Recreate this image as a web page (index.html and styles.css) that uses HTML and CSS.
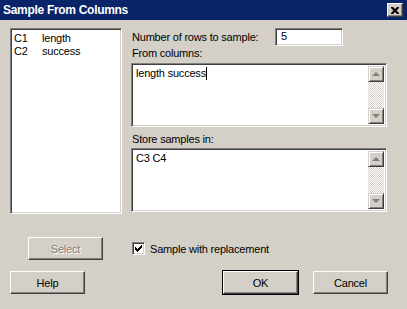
FILE: index.html
```html
<!DOCTYPE html>
<html lang="en">
<head>
    <meta charset="UTF-8">
    <title>Sample From Columns</title>
    <link rel="stylesheet" href="styles.css">
</head>
<body>
    <div class="titlebar">
        <span class="title">Sample From Columns</span>
        <span class="close">
            <svg width="8" height="7" viewBox="0 0 8 7"><path d="M0 0h2l2 2 2-2h2v1l-2.5 2.5L8 6v1H6L4 5 2 7H0V6l2.5-2.5L0 1z" fill="#000"/></svg>
        </span>
    </div>

    <div class="main">
        <div class="columns-list sunken">
            <div class="col-row"><span class="col-id">C1</span>length</div>
            <div class="col-row"><span class="col-id">C2</span>success</div>
        </div>

        <div class="fields">
            <div class="rows-line">
                <label class="rows-label">Number of rows to sample:</label>
                <div class="rows-input sunken">5</div>
            </div>

            <label class="field-label">From columns:</label>
            <div class="textbox sunken">
                <div class="textbox-text">length success<span class="caret"></span></div>
                <div class="scrollbar">
                    <span class="sb-btn"><span class="arrow up"></span></span>
                    <span class="sb-track"></span>
                    <span class="sb-btn"><span class="arrow down"></span></span>
                </div>
            </div>

            <label class="field-label store">Store samples in:</label>
            <div class="textbox sunken">
                <div class="textbox-text">C3 C4</div>
                <div class="scrollbar">
                    <span class="sb-btn"><span class="arrow up"></span></span>
                    <span class="sb-track"></span>
                    <span class="sb-btn"><span class="arrow down"></span></span>
                </div>
            </div>
        </div>
    </div>

    <div class="options">
        <button class="btn disabled">Select</button>
        <label class="check">
            <span class="checkbox sunken">
                <svg width="7" height="7" viewBox="0 0 7 7"><path d="M0 2h1v1h1v1h1V3h1V2h1V1h1V0h1v3H6v1H5v1H4v1H3v1H2V6H1V5H0z" fill="#000"/></svg>
            </span>
            Sample with replacement
        </label>
    </div>

    <div class="buttons">
        <button class="btn">Help</button>
        <button class="btn default">OK</button>
        <button class="btn">Cancel</button>
    </div>
</body>
</html>
```

FILE: styles.css
```css
body {
    margin: 0;
    width: 407px;
    height: 309px;
    background-color: #d4d0c8;
    font-family: "Liberation Sans", Arial, sans-serif;
    font-size: 11px;
    letter-spacing: -0.2px;
    color: #000;
    overflow: hidden;
}

.titlebar {
    height: 20px;
    background-color: #0a246a;
    display: flex;
    align-items: center;
    padding: 0 4px 0 3px;
}
.title {
    color: #fff;
    font-weight: bold;
    font-size: 12px;
    letter-spacing: -0.3px;
    flex: 1;
}
.close {
    width: 14px;
    height: 12px;
    background-color: #d4d0c8;
    border: 1px solid;
    border-color: #fff #404040 #404040 #fff;
    box-shadow: inset -1px -1px #808080;
    display: flex;
    align-items: center;
    justify-content: center;
}

.sunken {
    background-color: #fff;
    border: 1px solid;
    border-color: #808080 #fff #fff #808080;
    box-shadow: inset 1px 1px #404040, inset -1px -1px #d4d0c8;
    box-sizing: border-box;
}

.main {
    display: flex;
    gap: 9px;
    padding: 8px 0 0 10px;
}

.columns-list {
    width: 112px;
    height: 186px;
    padding: 3px 0 0 3px;
}
.col-row {
    height: 13px;
    line-height: 13px;
}
.col-id {
    display: inline-block;
    width: 28px;
}

.fields {
    width: 256px;
    display: flex;
    flex-direction: column;
}
.rows-line {
    display: flex;
    align-items: center;
    height: 18px;
}
.rows-label {
    width: 144px;
    padding-left: 1px;
    box-sizing: border-box;
}
.rows-input {
    width: 68px;
    height: 18px;
    line-height: 14px;
    padding-left: 5px;
}
.field-label {
    line-height: 13px;
    margin: 1px 0 3px 1px;
}
.field-label.store {
    margin-top: 6px;
    margin-bottom: 2px;
}

.textbox {
    height: 64px;
    display: flex;
    padding: 2px;
}
.textbox-text {
    flex: 1;
    padding: 1px 0 0 2px;
    line-height: 13px;
}
.caret {
    display: inline-block;
    width: 1px;
    height: 13px;
    background-color: #000;
    vertical-align: top;
}

.scrollbar {
    width: 16px;
    display: flex;
    flex-direction: column;
}
.sb-btn {
    height: 16px;
    background-color: #d4d0c8;
    border: 1px solid;
    border-color: #d4d0c8 #404040 #404040 #d4d0c8;
    box-shadow: inset 1px 1px #fff, inset -1px -1px #808080;
    box-sizing: border-box;
    display: flex;
    align-items: center;
    justify-content: center;
}
.sb-track {
    flex: 1;
    background: repeating-conic-gradient(#fff 0 25%, #d4d0c8 0 50%) 0 0 / 2px 2px;
}
.arrow {
    width: 0;
    height: 0;
    border-left: 4px solid transparent;
    border-right: 4px solid transparent;
}
.arrow.up {
    border-bottom: 4px solid #808080;
}
.arrow.down {
    border-top: 4px solid #808080;
}

.options {
    display: flex;
    align-items: center;
    padding: 23px 0 0 28px;
}
.check {
    display: flex;
    align-items: center;
    gap: 5px;
    margin-left: 29px;
}
.checkbox {
    width: 13px;
    height: 13px;
    display: flex;
    align-items: center;
    justify-content: center;
}

.btn {
    width: 75px;
    height: 23px;
    padding: 0;
    font-family: inherit;
    font-size: 11px;
    letter-spacing: -0.2px;
    color: #000;
    background-color: #d4d0c8;
    border: 1px solid;
    border-color: #fff #404040 #404040 #fff;
    box-shadow: inset -1px -1px #808080;
    box-sizing: border-box;
}
.btn.disabled {
    color: #808080;
    text-shadow: 1px 1px #fff;
}
.btn.default {
    outline: 1px solid #000;
    outline-offset: 0;
}

.buttons {
    display: flex;
    padding: 11px 0 0 10px;
}
.buttons .default {
    margin-left: 138px;
}
.buttons .default + .btn {
    margin-left: 15px;
}
```
